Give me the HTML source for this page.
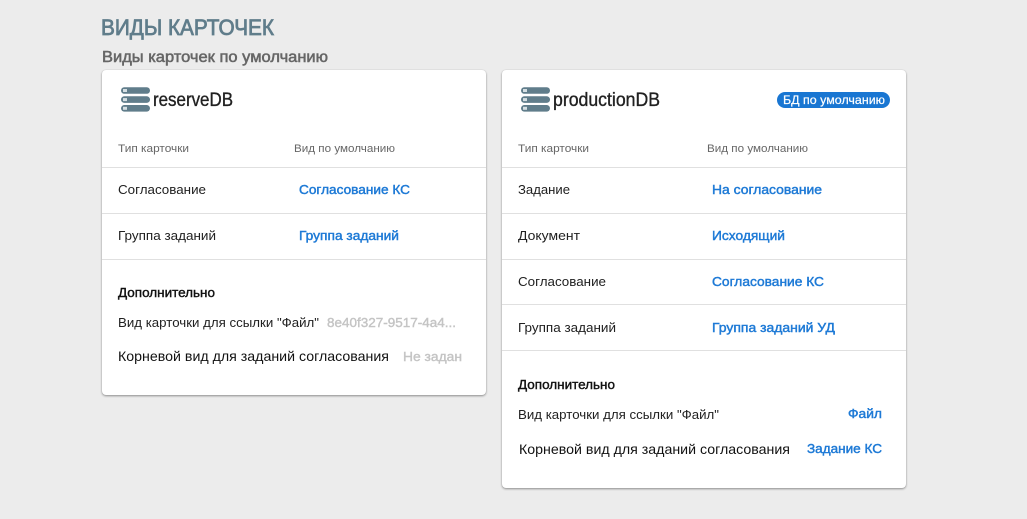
<!DOCTYPE html>
<html lang="ru"><head><meta charset="utf-8"><title>Виды карточек</title>
<style>
html,body{margin:0;padding:0;width:1027px;height:519px;overflow:hidden;background:#ececec}
.card{position:absolute;background:#fff;border-radius:4px;box-shadow:0 1px 2px rgba(0,0,0,.4),0 0 1px rgba(0,0,0,.1)}
.line{position:absolute;height:1px;background:#e0e0e0}
.chip{position:absolute;left:777px;top:92px;width:113px;height:16px;border-radius:8px;background:#1976d2}
svg{position:absolute;left:0;top:0}
text{font-family:"Liberation Sans",sans-serif}
.h{font-size:22px;fill:#607d8b;stroke:#607d8b;stroke-width:.8}
.s{font-size:16px;fill:#666;stroke:#666;stroke-width:.55}
.db{font-size:19px;fill:#212121;stroke:#212121;stroke-width:.35}
.th{font-size:11px;fill:#666}
.td{font-size:13px;fill:#212121}
.a{font-size:13px;fill:#1e7ad6;stroke:#1e7ad6;stroke-width:.45}
.b{font-size:13px;fill:#111;stroke:#111;stroke-width:.4}
.r{font-size:14px;fill:#111}
.g{font-size:13px;fill:#c4c4c4;stroke:#c4c4c4;stroke-width:.4}
.c{font-size:12px;fill:#fff;stroke:#fff;stroke-width:.2}
</style></head><body>
<div class="card" style="left:102px;top:70px;width:384px;height:325px"></div>
<div class="card" style="left:502px;top:70px;width:404px;height:418px"></div>
<div class="line" style="left:102px;top:167px;width:384px"></div>
<div class="line" style="left:102px;top:213px;width:384px"></div>
<div class="line" style="left:102px;top:259px;width:384px"></div>
<div class="line" style="left:502px;top:167px;width:404px"></div>
<div class="line" style="left:502px;top:213px;width:404px"></div>
<div class="line" style="left:502px;top:259px;width:404px"></div>
<div class="line" style="left:502px;top:304px;width:404px"></div>
<div class="line" style="left:502px;top:350px;width:404px"></div>
<div class="chip"></div>
<svg width="1027" height="519" viewBox="0 0 1027 519">
<g fill="#607d8b">
<rect x="121" y="87.2" width="29" height="6.6" rx="3.3"/><rect x="121" y="96.3" width="29" height="6.6" rx="3.3"/><rect x="121" y="105" width="29" height="6.6" rx="3.3"/>
<rect x="123" y="89" width="4" height="3" fill="#d5dfe3"/><rect x="123" y="98.1" width="4" height="3" fill="#d5dfe3"/><rect x="123" y="106.8" width="4" height="3" fill="#d5dfe3"/>
</g>
<g fill="#607d8b">
<rect x="521" y="87.2" width="29" height="6.6" rx="3.3"/><rect x="521" y="96.3" width="29" height="6.6" rx="3.3"/><rect x="521" y="105" width="29" height="6.6" rx="3.3"/>
<rect x="523" y="89" width="4" height="3" fill="#d5dfe3"/><rect x="523" y="98.1" width="4" height="3" fill="#d5dfe3"/><rect x="523" y="106.8" width="4" height="3" fill="#d5dfe3"/>
</g>
<text class="h" x="101" y="35" textLength="173" lengthAdjust="spacingAndGlyphs">ВИДЫ КАРТОЧЕК</text>
<text class="s" x="102" y="62" textLength="226" lengthAdjust="spacingAndGlyphs">Виды карточек по умолчанию</text>

<text class="db" x="153" y="106" textLength="80" lengthAdjust="spacingAndGlyphs">reserveDB</text>
<text class="th" x="118" y="152" textLength="71" lengthAdjust="spacingAndGlyphs">Тип карточки</text>
<text class="th" x="294" y="152" textLength="101" lengthAdjust="spacingAndGlyphs">Вид по умолчанию</text>
<text class="td" x="118" y="194" textLength="88" lengthAdjust="spacingAndGlyphs">Согласование</text>
<text class="a" x="299" y="194" textLength="111" lengthAdjust="spacingAndGlyphs">Согласование КС</text>
<text class="td" x="118" y="240" textLength="98" lengthAdjust="spacingAndGlyphs">Группа заданий</text>
<text class="a" x="299" y="240" textLength="100" lengthAdjust="spacingAndGlyphs">Группа заданий</text>
<text class="b" x="118" y="297" textLength="97" lengthAdjust="spacingAndGlyphs">Дополнительно</text>
<text class="td" x="118" y="327" textLength="201" lengthAdjust="spacingAndGlyphs">Вид карточки для ссылки "Файл"</text>
<text class="g" x="327" y="327" textLength="129" lengthAdjust="spacingAndGlyphs">8e40f327-9517-4a4...</text>
<text class="r" x="118" y="361" textLength="271" lengthAdjust="spacingAndGlyphs">Корневой вид для заданий согласования</text>
<text class="g" x="403" y="361" textLength="59" lengthAdjust="spacingAndGlyphs">Не задан</text>

<text class="db" x="553" y="106" textLength="107" lengthAdjust="spacingAndGlyphs">productionDB</text>
<text class="c" x="783" y="104" textLength="102" lengthAdjust="spacingAndGlyphs">БД по умолчанию</text>
<text class="th" x="518" y="152" textLength="71" lengthAdjust="spacingAndGlyphs">Тип карточки</text>
<text class="th" x="707" y="152" textLength="101" lengthAdjust="spacingAndGlyphs">Вид по умолчанию</text>
<text class="td" x="518" y="194" textLength="52" lengthAdjust="spacingAndGlyphs">Задание</text>
<text class="a" x="712" y="194" textLength="110" lengthAdjust="spacingAndGlyphs">На согласование</text>
<text class="td" x="518" y="240" textLength="62" lengthAdjust="spacingAndGlyphs">Документ</text>
<text class="a" x="712" y="240" textLength="73" lengthAdjust="spacingAndGlyphs">Исходящий</text>
<text class="td" x="518" y="286" textLength="88" lengthAdjust="spacingAndGlyphs">Согласование</text>
<text class="a" x="712" y="286" textLength="112" lengthAdjust="spacingAndGlyphs">Согласование КС</text>
<text class="td" x="518" y="332" textLength="98" lengthAdjust="spacingAndGlyphs">Группа заданий</text>
<text class="a" x="712" y="332" textLength="123" lengthAdjust="spacingAndGlyphs">Группа заданий УД</text>
<text class="b" x="518" y="389" textLength="97" lengthAdjust="spacingAndGlyphs">Дополнительно</text>
<text class="td" x="518" y="419" textLength="201" lengthAdjust="spacingAndGlyphs">Вид карточки для ссылки "Файл"</text>
<text class="a" x="848" y="418" textLength="34" lengthAdjust="spacingAndGlyphs">Файл</text>
<text class="r" x="519" y="454" textLength="271" lengthAdjust="spacingAndGlyphs">Корневой вид для заданий согласования</text>
<text class="a" x="807" y="453" textLength="75" lengthAdjust="spacingAndGlyphs">Задание КС</text>
</svg>
</body></html>
